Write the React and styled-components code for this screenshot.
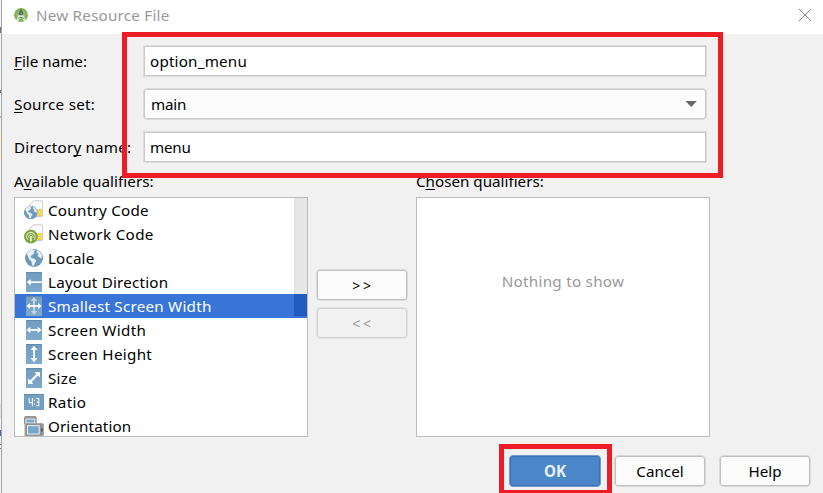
import React from "react";
import styled, { createGlobalStyle, css } from "styled-components";

const Global = createGlobalStyle`
  * { box-sizing: border-box; }
  html, body { margin: 0; padding: 0; overflow: hidden; background: #f0f0f0; }
  body { font-family: "Noto Sans", "Open Sans", sans-serif; font-size: 15.2px; color: #000; }
  u { text-decoration-thickness: 1px; text-underline-offset: 2px; text-decoration-skip-ink: none; }
`;

const Window = styled.div`
  position: relative;
  width: 823px;
  height: 493px;
  overflow: hidden;
  display: flex;
  padding-left: 1px;
  background: linear-gradient(
    #f4f4f5 27px, #8d6e6c 27px 33px, #f4f4f5 33px 90px, #8d6e6c 90px 93px,
    #f4f4f5 93px 116px, #d9b98a 116px 118px, #f1f1f1 118px 130px, #fbf3cf 130px 160px,
    #f4f4f5 160px 404px, #e2e2e4 404px 418px, #f4f4f5 418px 430px, #4a5fa8 430px 436px,
    #f4f4f5 436px 444px, #88888c 444px 445px, #f4f4f5 445px 448px, #88888c 448px 449px, #f1f1f1 449px
  );
`;

const Frame = styled.div`
  flex: 1;
  min-width: 0;
  display: flex;
  flex-direction: column;
  border-left: 1px solid #a3a4a8;
  background: #f1f1f1;
`;

const TitleBar = styled.header`
  height: 34px;
  flex: none;
  display: flex;
  align-items: center;
  background: #fff;
  padding: 0 11px 4px 12px;
`;

const Title = styled.span`
  flex: 1;
  margin-left: 8px;
  color: #999;
  line-height: 22px;
  letter-spacing: 0.23px;
`;

const Form = styled.div`
  display: grid;
  grid-template-columns: 129px 564px;
  grid-auto-rows: 32px;
  row-gap: 11px;
  padding: 11px 0 0 12px;
  align-items: center;
`;

const Label = styled.label`
  white-space: nowrap;
  line-height: 22px;
  letter-spacing: ${(p) => p.$track || 0}px;
`;

const Field = styled.div`
  height: 32px;
  display: flex;
  align-items: center;
  justify-content: space-between;
  padding: 0 8px 0 ${(p) => (p.$select ? 7 : 6)}px;
  border: 1px solid ${(p) => (p.$select ? "#dadada" : "#dedede")};
  border-radius: ${(p) => (p.$select ? 4 : 0)}px;
  box-shadow: inset 0 0 0 1px #c9c9c9;
  background: ${(p) => (p.$select ? "#fcfcfc" : "#fff")};
  letter-spacing: ${(p) => p.$track || 0}px;
`;

const Headings = styled.div`
  display: grid;
  grid-template-columns: 402px 1fr;
  height: 34px;
  padding: 7px 0 0 12px;
`;

const Columns = styled.div`
  display: flex;
  height: 240px;
  padding-left: 12px;
`;

const Panel = styled.div`
  position: relative;
  width: 294px;
  height: 240px;
  overflow: hidden;
  border: 1px solid #bdbdbd;
  background: #fff;
`;

const Item = styled.div`
  height: 24px;
  display: flex;
  align-items: center;
  padding-left: 9px;
  line-height: 24px;
  white-space: nowrap;
  letter-spacing: ${(p) => p.$track}px;
  ${(p) => p.$selected && css`background: #3875d7; color: #fff;`}
  svg { flex: none; margin-right: 4px; }
`;

const ScrollThumb = styled.div`
  position: absolute;
  top: 0;
  right: 0;
  width: 13px;
  height: 118px;
  background: #e7e7e7;
  border: 1px solid #dfdfdf;
  border-right: 0;
`;

const ThumbOverlap = styled.div`
  position: absolute;
  left: -1px;
  right: 0;
  bottom: -1px;
  height: 22px;
  background: #205cbf;
  border-bottom: 1px solid #1c54b4;
`;

const Transfer = styled.div`
  width: 108px;
  display: flex;
  flex-direction: column;
  align-items: center;
  gap: 6px;
  padding-top: 72px;
`;

const Button = styled.button`
  width: 92px;
  height: 32px;
  padding: 0 0 1px;
  font: inherit;
  color: #000;
  background: #fcfcfc;
  border: 1px solid #dadada;
  border-radius: 4px;
  box-shadow: inset 0 0 0 1px #c0c0c0;
  ${(p) => p.$disabled && css`color: #999; background: #f1f1f1; border-color: #e3e3e3; box-shadow: inset 0 0 0 1px #d2d2d2;`}
  ${(p) => p.$primary && css`color: #e9f0f9; font-weight: 700; background: #4a86c8; border-color: #6f9acd; box-shadow: inset 0 0 0 1px #3c72b2;`}
`;

const TransferButton = styled(Button)`
  font-size: 14px;
  letter-spacing: 2.8px;
  padding: 1px 0 0 2px;
`;

const Empty = styled.div`
  padding-top: 71px;
  text-align: center;
  line-height: 24px;
  color: #999;
  letter-spacing: 0.27px;
`;

const Footer = styled.footer`
  display: flex;
  justify-content: flex-end;
  gap: 13px;
  padding: 18px 12px 0 0;
`;

const Highlight = styled.div`
  position: absolute;
  border: 5px solid #ee1c25;
  pointer-events: none;
`;
const FormHighlight = styled(Highlight)`
  left: 122px; top: 32px; width: 601px; height: 146px;
`;
const OkHighlight = styled(Highlight)`
  left: 499px; top: 444px; width: 113px; height: 51px;
`;

const Svg = ({ children, w = 20, h = 20 }) => (
  <svg width={w} height={h} viewBox={`0 0 ${w} ${h}`} fill="none">{children}</svg>
);

const Globe = () => (
  <>
    <circle cx="10" cy="10" r="9" fill="#6d98bb" />
    <path d="M2.5 6Q4.5 2 9 1.6L11.5 2.5 9.5 4 10.5 5.5 8 7 6.5 8.5 7.5 10 10.5 10.7 12.5 12.5 11 15 9.5 18.3 8 17 7.5 13.5 5 11 4 8.5ZM13 2.3Q16.5 3.6 18 7L17.5 10.5 15.5 9.5 13.5 8 14.5 6 12.5 4.5Z" fill="#e8f0f6" />
  </>
);
const SimCard = () => (
  <>
    <path d="M5.5 5 9.5 .8H17Q18.7 .8 18.7 2.5V15Q18.7 16.5 17 16.5H5.5Z" fill="#fcfcfc" stroke="#c9c9c9" />
    <rect x="13.3" y="9" width="4.7" height="7" rx="1" fill="#f5cd3c" />
    <path d="M13.3 11.3H18M13.3 13.7H18" stroke="#fbe89a" strokeWidth=".8" />
  </>
);
const Tile = () => (
  <>
    <defs>
      <linearGradient id="tile" x1="0" y1="0" x2="0" y2="1">
        <stop stopColor="#709bbd" /><stop offset="1" stopColor="#7dabcd" />
      </linearGradient>
    </defs>
    <rect x="2" y="0" width="16" height="20" fill="url(#tile)" />
    <path d="M2 .5H18" stroke="#628cad" />
  </>
);

const icons = {
  country: <Svg><SimCard /><g transform="translate(-.8 4.9) scale(.76)"><Globe /></g></Svg>,
  network: (
    <Svg>
      <SimCard />
      <circle cx="6.9" cy="12.6" r="6.9" fill="#7ba43a" />
      <path d="M3.9 15.8a4.3 4.3 0 1 1 6 0" stroke="#d5e5b9" strokeWidth="1.1" />
      <path d="M5.3 14a2.2 2.2 0 1 1 3.2 0" stroke="#e5f0cf" strokeWidth=".8" />
      <path d="M6.9 12V17.5" stroke="#fff" strokeWidth="1.6" />
    </Svg>
  ),
  locale: <Svg><Globe /></Svg>,
  layout: <Svg><Tile /><path d="M5 10.2H18" stroke="#fff" strokeWidth="1.6" /><path d="M2.7 10.2 6.7 7V13.4Z" fill="#fff" /></Svg>,
  smallest: (
    <Svg>
      <Tile />
      <path d="M10 4V16" stroke="#c3d4e6" strokeWidth="2" />
      <path d="M10 1 13.3 5H6.7ZM10 19 13.3 15H6.7Z" fill="#c3d4e6" />
      <path d="M5 10H15" stroke="#fff" strokeWidth="1.8" />
      <path d="M2.5 10 6 6.9V13.1ZM17.5 10 14 6.9V13.1Z" fill="#fff" />
    </Svg>
  ),
  width: <Svg><Tile /><path d="M5 10H15" stroke="#fff" strokeWidth="1.8" /><path d="M2.5 10 6.3 6.7V13.3ZM17.5 10 13.7 6.7V13.3Z" fill="#fff" /></Svg>,
  height: <Svg><Tile /><path d="M10 5V15" stroke="#fff" strokeWidth="1.8" /><path d="M10 1.7 13.5 6H6.5ZM10 18.3 13.5 14H6.5Z" fill="#fff" /></Svg>,
  size: <Svg><Tile /><path d="M6 14 14 6" stroke="#fff" strokeWidth="2.4" /><path d="M16 4V9.5L10.5 4ZM4 16V10.5L9.5 16Z" fill="#fff" /></Svg>,
  ratio: (
    <Svg>
      <rect y="2" width="20" height="16" fill="#739fc2" />
      <path d="M0 2.5H20" stroke="#628cad" />
      <path d="M5.2 6V10.6H9M8.4 6V14.3M12.2 6.5H14.8V13.8H12.2M12.8 10.1H14.8" stroke="#f4f8fb" strokeWidth="1.1" />
      <path d="M10.6 7.8V9M10.6 11.6V12.8" stroke="#f4f8fb" strokeWidth="1.1" />
    </Svg>
  ),
  orientation: (
    <Svg>
      <path d="M0 20V2Q0 0 2 0H11Q12.7 0 12.7 2V8H0Z" fill="#949494" />
      <path d="M2 3H10.7V7H2Z" fill="#78a9cc" stroke="#eee" />
      <path d="M1 7.5H18Q19.5 7.5 19.5 9V18.5Q19.5 20 18 20H1Z" fill="#929292" stroke="#a6a6a6" />
      <rect x="3.5" y="9.7" width="11.7" height="8.3" fill="#73a7cc" stroke="#f2f2f2" />
      <path d="M17.8 12.5v3" stroke="#444" strokeWidth="1.3" />
    </Svg>
  ),
};

const qualifiers = [
  ["country", "Country Code", 0.27], ["network", "Network Code", 0.33],
  ["locale", "Locale", 0.15], ["layout", "Layout Direction", 0.2],
  ["smallest", "Smallest Screen Width", 0.24], ["width", "Screen Width", 0.33],
  ["height", "Screen Height", 0.32], ["size", "Size", 0.25],
  ["ratio", "Ratio", 0.35], ["orientation", "Orientation", 0.12],
];

const AppIcon = () => (
  <Svg w={14} h={16}>
    <circle cx="7" cy="8" r="6.9" fill="#7cb653" />
    <circle cx="7" cy="8" r="4.6" fill="#93c371" />
    <path d="M5.4 7 1.8 14 3.5 15 7 9.5 10.5 15 12.2 14 8.6 7Z" fill="#e9ebe9" />
    <path d="M4 11.3Q7 9.5 10 11.3" stroke="#6d8b65" strokeWidth="1" />
    <circle cx="7" cy="6.2" r="2.3" fill="#56625c" />
    <circle cx="7" cy="6.4" r=".8" fill="#9aa59f" />
    <path d="M7 2.2V4.5" stroke="#56625c" strokeWidth="1.6" />
  </Svg>
);

export default function App() {
  return (
    <Window>
      <Global />
      <Frame>
        <TitleBar>
          <AppIcon />
          <Title>New Resource File</Title>
          <Svg w={14} h={14}><path d="M1 1 13 13M13 1 1 13" stroke="#858585" /></Svg>
        </TitleBar>
        <Form>
          <Label><u>F</u>ile name:</Label>
          <Field $track={0.2}>option_menu</Field>
          <Label $track={0.28}><u>S</u>ource set:</Label>
          <Field $select $track={-0.2}>main<Svg w={14} h={8}><path d="M1.5 1H12.8L7.2 7Z" fill="#666" /></Svg></Field>
          <Label $track={0.2}>Director<u>y</u> name:</Label>
          <Field $track={-0.2}>menu</Field>
        </Form>
        <Headings>
          <Label $track={0.06}>A<u>v</u>ailable qualifiers:</Label>
          <Label>C<u>h</u>osen qualifiers:</Label>
        </Headings>
        <Columns>
          <Panel>
            {qualifiers.map(([icon, name, track]) => (
              <Item key={icon} $track={track} $selected={icon === "smallest"}>{icons[icon]}{name}</Item>
            ))}
            <ScrollThumb><ThumbOverlap /></ScrollThumb>
          </Panel>
          <Transfer>
            <TransferButton>&gt;&gt;</TransferButton>
            <TransferButton $disabled>&lt;&lt;</TransferButton>
          </Transfer>
          <Panel><Empty>Nothing to show</Empty></Panel>
        </Columns>
        <Footer>
          <Button $primary>OK</Button>
          <Button>Cancel</Button>
          <Button>Help</Button>
        </Footer>
      </Frame>
      <FormHighlight />
      <OkHighlight />
    </Window>
  );
}
